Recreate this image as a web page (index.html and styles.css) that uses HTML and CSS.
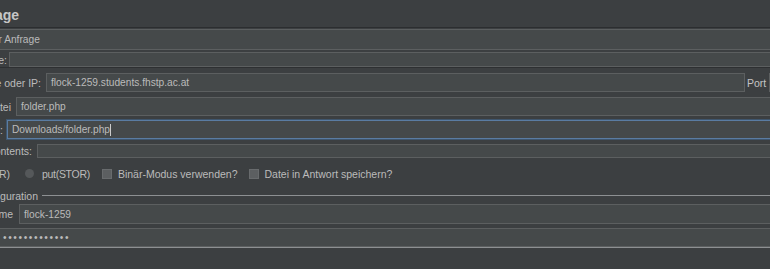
FILE: index.html
```html
<!DOCTYPE html>
<html lang="de">
<head>
    <meta charset="UTF-8">
    <title>FTP-Anfrage</title>
    <link rel="stylesheet" href="styles.css">
</head>
<body>
    <div class="panel">
        <div class="title">
            <span class="clip title-label">FTP-Anfrage</span>
        </div>

        <div class="row row-name">
            <div class="field name-field">für Anfrage</div>
        </div>

        <div class="row row-comments">
            <span class="clip label-comments">Kommentare:</span>
            <div class="field"></div>
        </div>
        <div class="sep"></div>

        <div class="row row-server">
            <span class="clip label-server">Servername oder IP:</span>
            <div class="field server-field">flock-1259.students.fhstp.ac.at</div>
            <span class="port-label">Port</span>
            <div class="field"></div>
        </div>

        <div class="row row-remote">
            <span class="clip label-remote">Entfernte Datei</span>
            <div class="field">folder.php</div>
        </div>

        <div class="row row-local">
            <span class="clip label-local">Lokale Datei:</span>
            <div class="field focused">Downloads/folder.php<span class="caret"></span></div>
        </div>

        <div class="row row-contents">
            <span class="clip label-contents">Local File Contents:</span>
            <div class="field"></div>
        </div>

        <div class="row row-options">
            <span class="clip label-get">get(RETR)</span>
            <span class="radio"></span>
            <span class="opt-put">put(STOR)</span>
            <span class="check check-binary"></span>
            <span class="opt-text">Binär-Modus verwenden?</span>
            <span class="check check-save"></span>
            <span class="opt-text">Datei in Antwort speichern?</span>
        </div>

        <div class="legend">
            <span class="clip label-legend">Anmeldekonfiguration</span>
            <span class="legend-line"></span>
        </div>

        <div class="row row-user">
            <span class="clip label-user">Benutzername</span>
            <div class="field">flock-1259</div>
        </div>

        <div class="row row-pass">
            <div class="field pass-field">•••••••••••••</div>
        </div>
        <div class="group-bottom"></div>
    </div>
</body>
</html>
```

FILE: styles.css
```css
body {
    margin: 0;
    background: #3c3f41;
    overflow: hidden;
    font-family: "Liberation Sans", Arial, sans-serif;
    font-size: 10.5px;
    color: #bbbbbb;
}
.panel {
    width: 800px;
    height: 269px;
    display: flex;
    flex-direction: column;
}
/* labels are cut by the left window edge, so text overflows to the left */
.clip {
    display: flex;
    justify-content: flex-end;
    flex: none;
    white-space: nowrap;
}
.title {
    height: 28px;
    padding-top: 3px;
    box-sizing: border-box;
    border-bottom: 1px solid #2c2e30;
    display: flex;
    align-items: center;
}
.title-label {
    width: 19px;
    font-size: 14px;
    font-weight: bold;
    color: #c6c6c6;
}
.row {
    display: flex;
    align-items: center;
}
.field {
    flex: 1;
    height: 100%;
    box-sizing: border-box;
    background: #45494a;
    border: 1px solid #5c5f60;
    display: flex;
    align-items: center;
    padding-left: 4px;
    font-size: 10.2px;
    white-space: nowrap;
}
.row-name {
    margin-top: 1px;
    height: 21px;
}
.name-field {
    margin-left: -16px;
    padding-left: 5px;
}
.row-comments {
    margin-top: 2px;
    height: 15px;
}
.label-comments {
    width: 7px;
    margin-right: 2px;
}
.sep {
    height: 1px;
    background: #2e3032;
}
.row-server {
    margin-top: 5px;
    height: 19px;
}
.label-server {
    width: 41px;
    margin-right: 5px;
}
.server-field {
    flex: none;
    width: 699px;
}
.port-label {
    margin: 0 3px 0 2px;
    color: #c4c4c4;
}
.row-remote {
    margin-top: 5px;
    height: 19px;
}
.label-remote {
    width: 11px;
    margin-right: 5px;
}
.row-local {
    margin-top: 4px;
    height: 19px;
}
.label-local {
    width: 3px;
    margin-right: 4px;
}
.focused {
    border-color: #5a7ca2;
    box-shadow: 0 0 0 1px #3f566e;
}
.caret {
    width: 1px;
    height: 12px;
    background: #cccccc;
}
.row-contents {
    margin-top: 5px;
    height: 14px;
}
.label-contents {
    width: 32px;
    margin-right: 5px;
}
.row-options {
    margin-top: 7px;
    height: 17px;
    white-space: nowrap;
}
.label-get {
    width: 10px;
}
.radio {
    width: 9px;
    height: 9px;
    margin-left: 15px;
    border-radius: 50%;
    background: #55585a;
    flex: none;
}
.opt-put {
    margin-left: 8px;
    letter-spacing: -0.3px;
}
.check {
    width: 10px;
    height: 10px;
    box-sizing: border-box;
    background: #5c5f61;
    border: 1px solid #686b6d;
    flex: none;
}
.check-binary {
    margin-left: 12px;
}
.check-save {
    margin-left: 11px;
}
.opt-text {
    margin-left: 6px;
}
.legend {
    margin-top: 7px;
    height: 13px;
    display: flex;
    align-items: center;
}
.label-legend {
    width: 38px;
}
.legend-line {
    flex: 1;
    height: 1px;
    margin-left: 4px;
    background: #8d9092;
}
.row-user {
    margin-top: 2px;
    height: 20px;
}
.label-user {
    width: 13px;
    margin-right: 6px;
}
.row-pass {
    margin-top: 4px;
    height: 19px;
}
.pass-field {
    margin-left: -3px;
    padding-left: 5px;
    letter-spacing: 1.6px;
}
.group-bottom {
    height: 1px;
    background: #8d9092;
}
```
